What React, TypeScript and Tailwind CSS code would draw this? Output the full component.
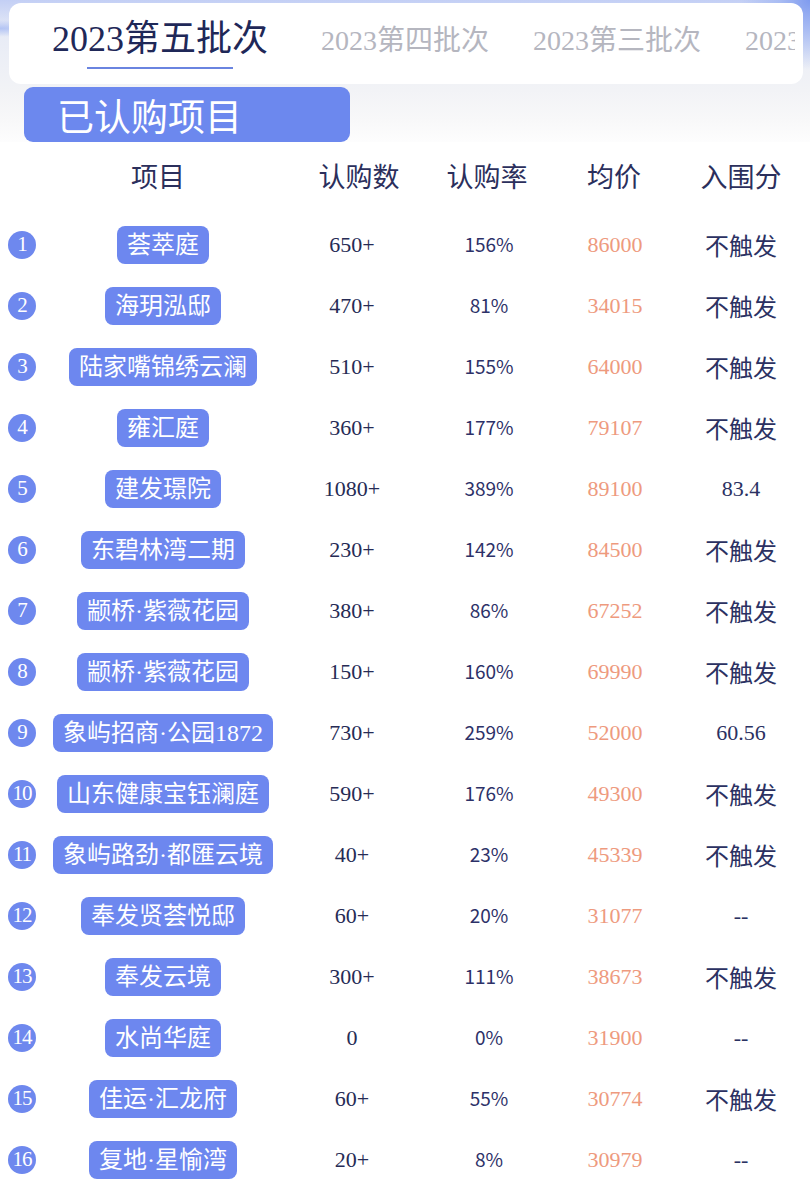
import React from "react";

type Row = { name: string; count: string; rate: string; price: string; score: string };

const rows: Row[] = [
  { name: "荟萃庭", count: "650+", rate: "156%", price: "86000", score: "不触发" },
  { name: "海玥泓邸", count: "470+", rate: "81%", price: "34015", score: "不触发" },
  { name: "陆家嘴锦绣云澜", count: "510+", rate: "155%", price: "64000", score: "不触发" },
  { name: "雍汇庭", count: "360+", rate: "177%", price: "79107", score: "不触发" },
  { name: "建发璟院", count: "1080+", rate: "389%", price: "89100", score: "83.4" },
  { name: "东碧林湾二期", count: "230+", rate: "142%", price: "84500", score: "不触发" },
  { name: "颛桥·紫薇花园", count: "380+", rate: "86%", price: "67252", score: "不触发" },
  { name: "颛桥·紫薇花园", count: "150+", rate: "160%", price: "69990", score: "不触发" },
  { name: "象屿招商·公园1872", count: "730+", rate: "259%", price: "52000", score: "60.56" },
  { name: "山东健康宝钰澜庭", count: "590+", rate: "176%", price: "49300", score: "不触发" },
  { name: "象屿路劲·都匯云境", count: "40+", rate: "23%", price: "45339", score: "不触发" },
  { name: "奉发贤荟悦邸", count: "60+", rate: "20%", price: "31077", score: "--" },
  { name: "奉发云境", count: "300+", rate: "111%", price: "38673", score: "不触发" },
  { name: "水尚华庭", count: "0", rate: "0%", price: "31900", score: "--" },
  { name: "佳运·汇龙府", count: "60+", rate: "55%", price: "30774", score: "不触发" },
  { name: "复地·星愉湾", count: "20+", rate: "8%", price: "30979", score: "--" },
];

const serif = "font-['Liberation_Serif','Noto_Sans_CJK_SC',serif]";
const sans = "font-['Noto_Sans_CJK_SC',sans-serif]";

export default function App() {
  return (
    <div className={`w-[810px] h-[1192px] overflow-hidden bg-white ${sans}`}>
      <div className="pt-[3px] pl-[9px] pr-[7px] bg-[radial-gradient(circle_at_100%_0%,#7f9bef_0,#a9bcf3_30px,transparent_70px),radial-gradient(ellipse_at_0%_20%,#b3c4f4_0,transparent_60px),linear-gradient(180deg,#c3cff5_0px,#e7ebf6_30px,#f2f3f6_90px,#f8f8f9_120px,#ffffff_150px)]">
        <div className="h-[81px] bg-white rounded-[12px] pr-[8px]">
          <div className="h-full flex items-start pl-[43px] gap-[44px] overflow-hidden whitespace-nowrap">
            <div className="relative flex flex-col items-center mr-[9px] shrink-0">
              <div className={`${serif} text-[36px] leading-[40px] mt-[16px] text-[#1f2858]`}>2023第五批次</div>
              <div className="mt-[8px] w-[146px] h-[2px] bg-[#6a84e0]"></div>
            </div>
            <div className={`${serif} shrink-0 text-[28px] leading-[32px] mt-[22px] text-[#b5b6bf]`}>2023第四批次</div>
            <div className={`${serif} shrink-0 text-[28px] leading-[32px] mt-[22px] text-[#b5b6bf]`}>2023第三批次</div>
            <div className={`${serif} shrink-0 text-[28px] leading-[32px] mt-[22px] text-[#b5b6bf]`}>2023第二批次</div>
          </div>
        </div>
        <div className="mt-[3px] ml-[15px] w-[326px] h-[55px] rounded-[9px] bg-[#6c88ee] flex items-center pl-[33px]">
          <span className="text-white text-[37px] leading-[40px]">已认购项目</span>
        </div>
      </div>

      <div className="flex items-center h-[64px] mt-[2px] text-[27px] text-[#2b2f5c] whitespace-nowrap">
        <div className="w-[316px] text-center">项目</div>
        <div className="w-[86px] text-center">认购数</div>
        <div className="ml-[35px] w-[100px] text-center">认购率</div>
        <div className="ml-[27px] w-[100px] text-center">均价</div>
        <div className="ml-[27px] w-[100px] text-center">入围分</div>
      </div>

      <div className="flex flex-col mt-[6px]">
        {rows.map((r, i) => (
          <div key={i} className="grid grid-cols-[44px_238px_140px_134px_118px_134px] h-[61px] items-center whitespace-nowrap">
            <div className="flex justify-center">
              <div className={`w-[28px] h-[28px] rounded-full bg-[#6e88ee] text-white flex items-center justify-center ${serif} text-[21px] leading-none tracking-[-1px]`}>
                {i + 1}
              </div>
            </div>
            <div className="flex justify-center">
              <div className={`h-[38px] px-[10px] rounded-[8px] bg-[#6d87ef] text-white flex items-center ${serif} text-[24px] leading-none`}>
                {r.name}
              </div>
            </div>
            <div className={`text-center ${serif} text-[22px] text-[#262b55]`}>{r.count}</div>
            <div className={`text-center ${sans} text-[19px] text-[#2d3168]`}>{r.rate}</div>
            <div className={`text-center ${serif} text-[22px] text-[#ee9a7e]`}>{r.price}</div>
            <div className={`text-center ${r.score === "不触发" ? `${sans} text-[24px]` : `${serif} text-[22px]`} text-[#2b3162]`}>
              {r.score}
            </div>
          </div>
        ))}
      </div>
    </div>
  );
}
